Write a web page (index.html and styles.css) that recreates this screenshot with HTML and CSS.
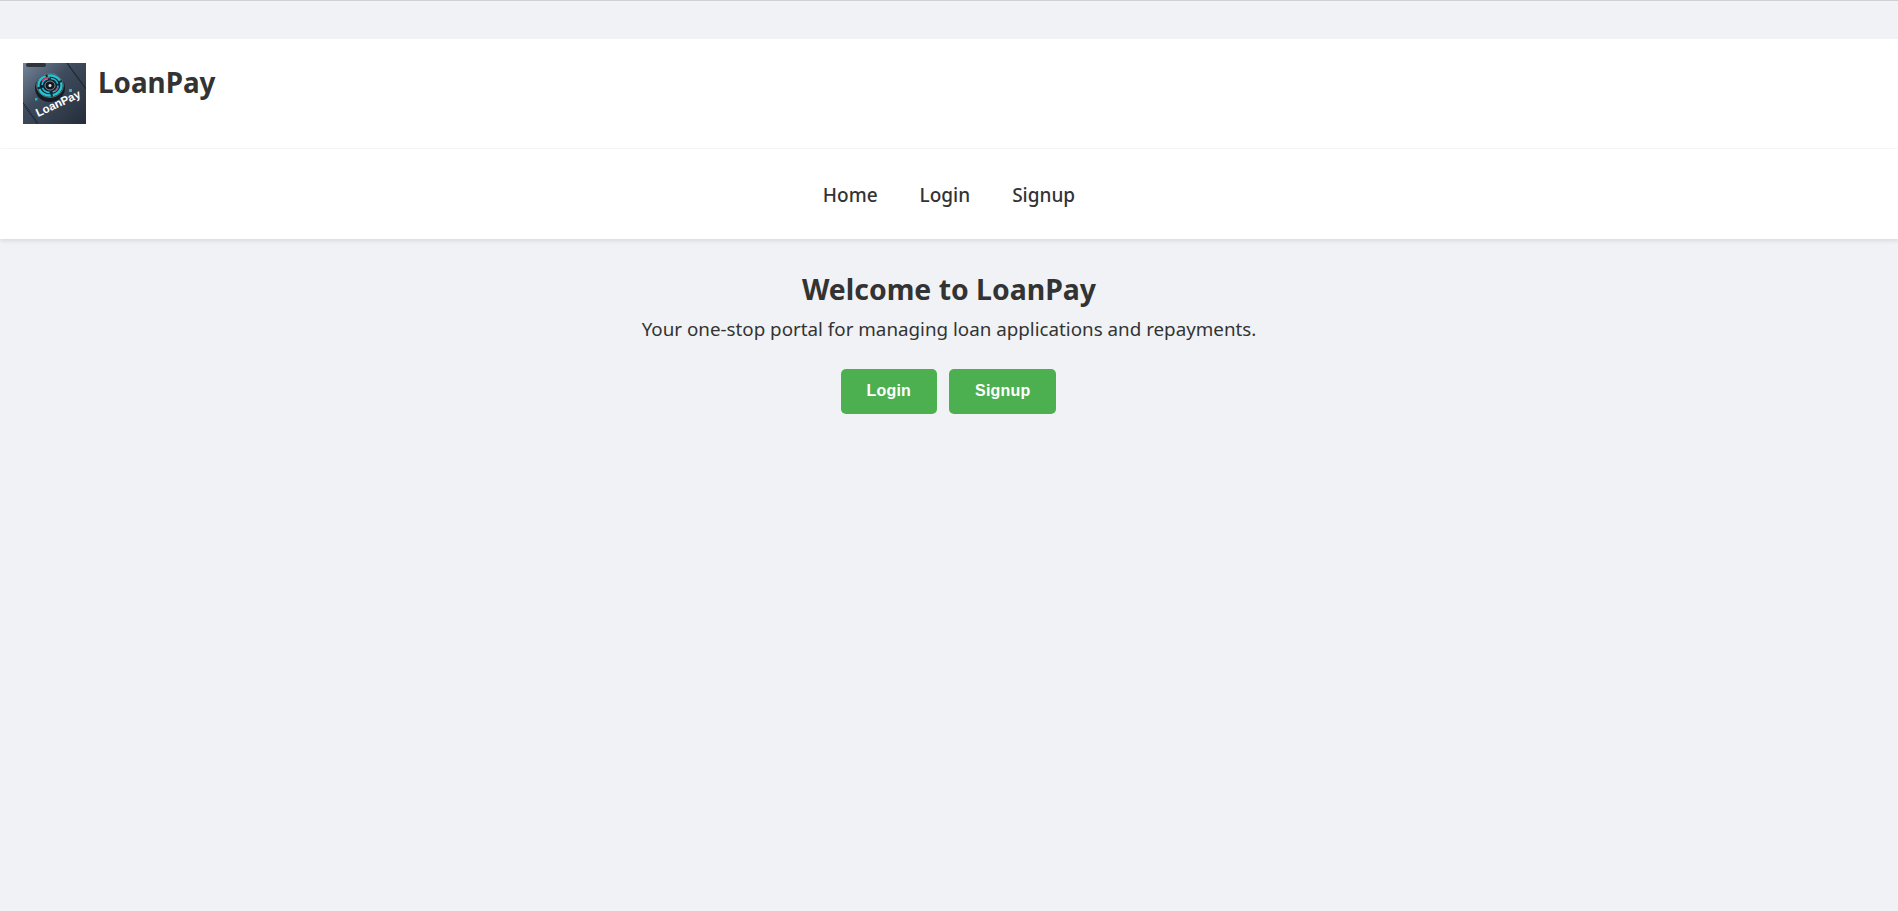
FILE: index.html
```html
<!DOCTYPE html>
<html lang="en">
  <head>
    <meta charset="UTF-8" />
    <title>LoanPay</title>
    <link rel="stylesheet" href="styles.css">
  </head>
  <body>
    <div class="top-line"></div>

    <header class="site-header">
      <div class="brand">
        <svg class="logo" viewBox="0 0 63 61" width="63" height="61">
          <defs>
            <linearGradient id="logoBg" x1="0" y1="0" x2="1" y2="1">
              <stop offset="0" stop-color="#75869a" />
              <stop offset="0.4" stop-color="#3f4c5e" />
              <stop offset="1" stop-color="#252d39" />
            </linearGradient>
          </defs>
          <rect width="63" height="61" fill="url(#logoBg)" />
          <rect x="3" y="0" width="20" height="4" rx="2" fill="#2f343c" />
          <path d="M44 0 L63 26" stroke="#20262e" stroke-width="1.2" />
          <path d="M0 40 L15 61" stroke="#1c2128" stroke-width="2" stroke-dasharray="1 1" />
          <ellipse cx="27" cy="25" rx="15" ry="14" fill="#171c23" />
          <ellipse cx="27" cy="22.5" rx="13.5" ry="12" fill="#0f2630" stroke="#8d99a5" stroke-width="0.6" />
          <ellipse cx="27" cy="22.5" rx="11.5" ry="10" fill="none" stroke="#27c3cf" stroke-width="2.4" stroke-dasharray="14 2" />
          <ellipse cx="27" cy="22.5" rx="8" ry="7" fill="none" stroke="#2ab4d6" stroke-width="1.6" stroke-dasharray="9 3" />
          <path d="M19 18 A9 8 0 0 1 27 14.5" stroke="#e0365a" stroke-width="1.6" fill="none" />
          <path d="M35 24 A8 7 0 0 1 32 28" stroke="#e0365a" stroke-width="1.4" fill="none" />
          <ellipse cx="27" cy="22.5" rx="5" ry="4.5" fill="#12181f" stroke="#c7ced5" stroke-width="0.6" />
          <circle cx="27" cy="22.5" r="1.5" fill="#dfe4e8" />
          <rect x="46" y="26" width="3" height="3" fill="#22b8c2" />
          <rect x="12" y="35" width="2.5" height="2.5" fill="#22b8c2" />
          <text class="logo-text" x="15" y="54" transform="rotate(-25 15 54)">LoanPay</text>
        </svg>
        <h1 class="brand-name">LoanPay</h1>
      </div>
    </header>

    <nav class="site-nav">
      <a href="#">Home</a>
      <a href="#">Login</a>
      <a href="#">Signup</a>
    </nav>

    <main class="welcome">
      <h2>Welcome to LoanPay</h2>
      <p>Your one-stop portal for managing loan applications and repayments.</p>
      <div class="actions">
        <a class="btn" href="#">Login</a>
        <a class="btn" href="#">Signup</a>
      </div>
    </main>
  </body>
</html>
```

FILE: styles.css
```css
* {
  box-sizing: border-box;
}

body {
  font-family: "Noto Sans", "Open Sans", sans-serif;
  background: #f0f2f5;
  color: #333;
  margin: 0;
  min-height: 911px;
}

.top-line {
  height: 1px;
  background: #cfd1d4;
}

.site-header {
  margin-top: 38px;
  background: #fff;
  border-bottom: 1px solid #f8f8f8;
  height: 110px;
  padding: 24px 23px 0;
}

.brand {
  display: flex;
  align-items: flex-start;
  gap: 12px;
}

.logo {
  display: block;
  flex: none;
}

.logo-text {
  font-family: "Liberation Sans", Arial, sans-serif;
  font-size: 11.5px;
  font-weight: bold;
  fill: #fff;
}

.brand-name {
  margin: 0;
  font-size: 27.8px;
  line-height: 38px;
  font-weight: 700;
}

.site-nav {
  background: #fff;
  height: 90px;
  padding-top: 2px;
  display: flex;
  justify-content: center;
  align-items: center;
  gap: 42px;
  box-shadow: 0 2px 4px rgba(0, 0, 0, 0.1);
}

.site-nav a {
  color: #333;
  text-decoration: none;
  font-size: 19px;
  font-weight: 500;
}

.welcome {
  text-align: center;
  padding-top: 31px;
}

.welcome h2 {
  margin: 0 0 8px;
  font-size: 28.4px;
  line-height: 38px;
  font-weight: 700;
}

.welcome p {
  margin: 0;
  font-size: 18.8px;
  line-height: 27px;
}

.actions {
  margin-top: 26px;
  padding-right: 1px;
  display: flex;
  justify-content: center;
  gap: 12px;
}

.btn {
  display: block;
  padding: 0 26px;
  height: 45px;
  line-height: 43px;
  background: #4caf50;
  color: #fff;
  border-radius: 5px;
  font-family: "Liberation Sans", Arial, sans-serif;
  font-size: 16px;
  font-weight: bold;
  letter-spacing: 0.2px;
  text-decoration: none;
}
```
